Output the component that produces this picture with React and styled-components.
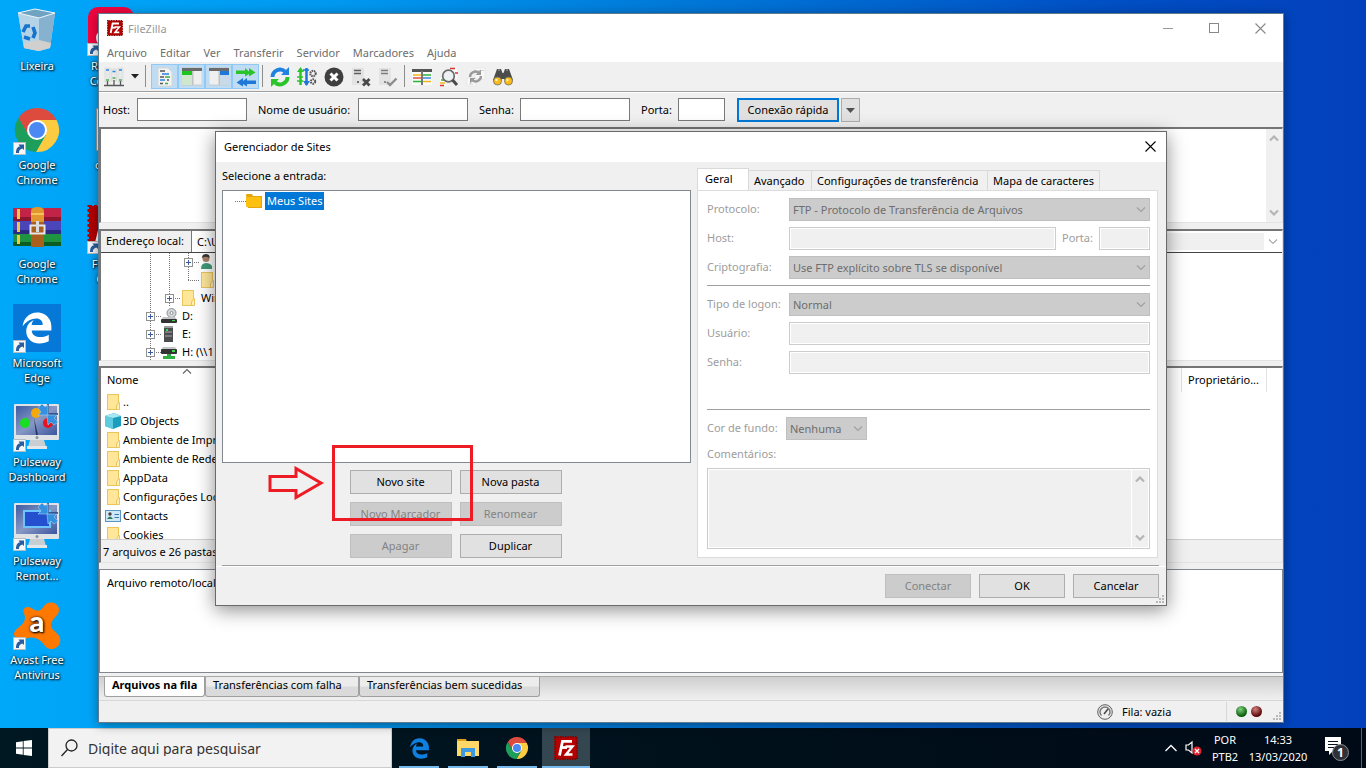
import React, { useState } from "react";
import styled, { createGlobalStyle, css } from "styled-components";
import { FaEdgeLegacy } from "react-icons/fa";

const GlobalStyle = createGlobalStyle`
  * {
    box-sizing: border-box;
  }

  body {
    margin: 0;
    font-family: "Noto Sans", "Open Sans", sans-serif;
    font-size: 11px;
    line-height: 15px;
    color: #000;
  }

  button, input, select, textarea {
    font: inherit;
    color: inherit;
    margin: 0;
    border-radius: 0;
  }

  svg {
    display: block;
    flex: none;
  }
`;

/* ---------- icons ---------- */

const FzLogo = ({ size }) => (
  <svg width={size} height={size} viewBox="0 0 24 24">
    <rect x="1" y="1" width="22" height="22" fill="#b30000" stroke="#8a0000" strokeWidth="2" strokeDasharray="1.5 1" />
    <g fill="none" stroke="#fff" strokeWidth="2.8">
      <path d="M5.500 19.500 L8.500 5.300 H18" />
      <path d="M7 11.500 H13" />
      <path d="M11.500 10.500 H18.500 L12 18.500 H18.500" strokeWidth="2.400" />
    </g>
  </svg>
);

const ChromeLogo = ({ size }) => (
  <svg width={size} height={size} viewBox="0 0 48 48">
    <path d="M5.5 12 A22 22 0 0 1 43.6 14 L24 14 L15.3 29 Z" fill="#dd4b3e" />
    <path d="M43.6 14 A22 22 0 0 1 22.9 46 L32.7 29 L24 14 Z" fill="#fdcb3f" />
    <path d="M22.9 46 A22 22 0 0 1 5.5 12 L15.3 29 L32.7 29 Z" fill="#1d9f5b" />
    <circle cx="24" cy="24" r="10" fill="#fff" />
    <circle cx="24" cy="24" r="8" fill="#4a89f3" />
  </svg>
);

const Shortcut = () => (
  <g>
    <rect x="0.5" y="36.5" width="12" height="12" fill="#f4f6f8" stroke="#b8bcc0" />
    <path d="M3 47 C3 42 5 40.5 7 40.5 L5.5 38.5 H11 V44 L9.3 42.5 C7 43.5 5.5 44.5 6 47 Z" fill="#2a5d9f" />
  </g>
);

const BinIcon = () => (
  <svg width="48" height="50" viewBox="0 0 48 50">
    <path d="M5 6 L22 2 L42 6 L37 41 L26 44 L11 41 Z" fill="#b9d3e4" />
    <path d="M5 6 L26 11 L26 44 L11 41 Z" fill="#b4d3e6" />
    <path d="M26 11 L42 6 L37 41 L26 44 Z" fill="#86b2cf" />
    <path d="M5 6 L22 2 L42 6 L26 11 Z" fill="#6fa3c2" stroke="#eef5f9" />
    <path d="M11 36 L26 33 L38 36 L37 41 L26 44 L11 41 Z" fill="#d2d0cf" />
    <g fill="none" stroke="#1673cf" strokeWidth="3.600">
      <path d="M10 25 L13 19 L17 19" />
      <path d="M20 20 L22 26 L20 31" />
      <path d="M17 32 L11 30" />
    </g>
  </svg>
);

const ChromeShortcutIcon = () => (
  <svg width="48" height="49" viewBox="0 0 48 49">
    <path d="M5.5 12 A22 22 0 0 1 43.6 14 L24 14 L15.3 29 Z" fill="#dd4b3e" />
    <path d="M43.6 14 A22 22 0 0 1 22.9 46 L32.7 29 L24 14 Z" fill="#fdcb3f" />
    <path d="M22.9 46 A22 22 0 0 1 5.5 12 L15.3 29 L32.7 29 Z" fill="#1d9f5b" />
    <circle cx="24" cy="24" r="10" fill="#fff" />
    <circle cx="24" cy="24" r="8" fill="#4a89f3" />
    <Shortcut />
  </svg>
);

const RarIcon = () => (
  <svg width="48" height="49" viewBox="0 0 48 49">
    <rect x="0" y="3" width="48" height="13" rx="1" fill="#c22448" />
    <rect x="0" y="12" width="48" height="4" fill="#8e1530" />
    <rect x="0" y="16" width="48" height="13" fill="#4a45b8" />
    <rect x="0" y="25" width="48" height="4" fill="#2c2a80" />
    <rect x="0" y="29" width="48" height="12" rx="1" fill="#1f9440" />
    <rect x="0" y="37" width="48" height="4" fill="#0d5c22" />
    <path d="M5.500 4 V14 M5.500 17 V27 M5.500 30 V39" stroke="#f2c744" strokeWidth="3" />
    <rect x="18" y="3" width="13" height="39" fill="#a8601c" />
    <path d="M18 17 V7 Q18 2 24.500 2 Q31 2 31 7 V17 Z" fill="#e2982f" />
    <rect x="18" y="8" width="13" height="2" fill="#f7c25c" />
    <rect x="17.500" y="20.500" width="14" height="8" fill="none" stroke="#e6e6ea" strokeWidth="2" />
    <rect x="23" y="16" width="3" height="11" fill="#d9dbe0" />
  </svg>
);

const EdgeShortcutIcon = () => (
  <svg width="48" height="49" viewBox="0 0 48 49">
    <rect width="48" height="48" fill="#0578d8" />
    <FaEdgeLegacy x="8" y="8" size={32} color="#fff" />
    <Shortcut />
  </svg>
);

const MonitorIcon = ({ remote }) => (
  <svg width="48" height="49" viewBox="0 0 48 49">
    <defs>
      <linearGradient id={remote ? "scrA" : "scrB"} x1="0" x2="1" y1="0" y2="1">
        <stop offset="0" stopColor="#3f5da3" />
        <stop offset="0.5" stopColor="#8798c4" />
        <stop offset="1" stopColor="#3c56a0" />
      </linearGradient>
    </defs>
    <path d="M17 37 H31 L33 44 H15 Z" fill="#c9ced3" />
    <rect x="14" y="43" width="20" height="3" fill="#e4e7ea" />
    <rect x="1" y="1" width="45" height="36" rx="1" fill="#dfe3e6" />
    <rect x="3" y="3" width="41" height="29" fill={`url(#${remote ? "scrA" : "scrB"})`} />
    {remote ? (
      <rect x="11" y="9" width="26" height="16" fill="#2450d0" stroke="#6cc4ff" strokeWidth="2" />
    ) : (
      <g>
        <circle cx="12" cy="20" r="5" fill="#18e020" />
        <circle cx="23" cy="10" r="5" fill="#f5a80a" />
        <circle cx="35" cy="20" r="5" fill="#e5141e" />
        <path d="M21 15 L25 32 H23 Z" fill="#23355f" />
      </g>
    )}
    <path d="M35 1 V11 H45" fill="none" stroke="#1c4080" strokeWidth="1.500" />
    <path d="M25 5 L29 1 L32 4 L35 2 V12 H25 L28 9 Z" fill="#3392e0" stroke="#9ed0f5" strokeWidth="0.600" />
    <path d="M34 12 H44 L41 15 L45 19 L41 22 L38 19 L35 22 Z" fill="#3392e0" stroke="#9ed0f5" strokeWidth="0.600" />
    <circle cx="24" cy="34.500" r="1.500" fill="#8a949c" />
    <Shortcut />
  </svg>
);

const AvastIcon = () => (
  <svg width="48" height="49" viewBox="0 0 48 49">
    <path
      d="M11 8 C13 5 17 6 20 8 C25 11 28 10 31 5 C35 -1 46 1 46 9 C46 15 39 17 38 23 C37 29 45 31 47 37 C49 46 38 51 33 46 C28 40 24 35 15 37 C6 40 -2 36 2 30 C5 26 12 23 12 17 C12 13 9 11 11 8 Z"
      fill="#ff7800"
    />
    <text x="24" y="31" textAnchor="middle" fontFamily="Lato, sans-serif" fontWeight="900" fontSize="29" fill="#fff">
      a
    </text>
    <Shortcut />
  </svg>
);

const PinkIcon = () => (
  <svg width="48" height="49" viewBox="0 0 48 49">
    <rect x="1" y="0" width="46" height="46" rx="10" fill="#f0063f" />
    <circle cx="18" cy="31" r="9" fill="#fff" />
    <Shortcut />
  </svg>
);

const PageFileIcon = () => (
  <svg width="48" height="49" viewBox="0 0 48 49">
    <path d="M9.500 2.500 H40.500 V44.500 H9.500 Z" fill="#f7f7f7" stroke="#9a9a9a" />
  </svg>
);

const FzShortcutIcon = () => (
  <svg width="48" height="49" viewBox="0 0 48 49">
    <rect x="2" y="1" width="44" height="44" fill="#b30000" stroke="#b30000" strokeWidth="3" strokeDasharray="3 2" />
    <path d="M10 40 L17 11 H36" fill="none" stroke="#fff" strokeWidth="5" />
    <Shortcut />
  </svg>
);

const Folder = () => (
  <svg width="16" height="18" viewBox="0 0 16 18">
    <rect x="2.500" y="1.500" width="11" height="15" fill="#ffe699" stroke="#e9c55a" />
    <path d="M13.500 9.500 H14.500 V16.500 H11.500 V13 Z" fill="#fff0b8" stroke="#e9c55a" />
  </svg>
);

const YellowFolder = () => (
  <svg width="17" height="16" viewBox="0 0 17 16">
    <path d="M0 2 Q0 1 1 1 H6 L7 3 H16 V15 H2 Z" fill="#e5a50f" />
    <rect x="0" y="4" width="15" height="10" rx="1" fill="#fdc010" />
  </svg>
);

const CubeIcon = () => (
  <svg width="16" height="16" viewBox="0 0 16 16">
    <path d="M0 3 L9 0 L16 3 V13 L8 16 L0 13 Z" fill="#1d9dbd" />
    <path d="M0 3 L8 5 V16 L0 13 Z" fill="#5fcbe0" />
    <path d="M0 3 L9 0 L16 3 L8 5 Z" fill="#a8e8f2" />
  </svg>
);

const ContactIcon = () => (
  <svg width="16" height="12" viewBox="0 0 16 12">
    <rect x="0.500" y="0.500" width="15" height="11" fill="#cfe8f7" stroke="#5b96bf" />
    <circle cx="5" cy="4" r="1.700" fill="#4a4038" />
    <path d="M2 9 Q5 4 8 9 Z" fill="#2d7d5a" />
    <path d="M9.500 4.500 H14 M9.500 7.500 H14" stroke="#3a76a8" />
  </svg>
);

const UserIcon = () => (
  <svg width="16" height="16" viewBox="0 0 16 16">
    <circle cx="7" cy="4.500" r="3.500" fill="#a8826a" />
    <path d="M3 4 Q3 0 7 0 Q11 0 10.500 4 Q7 1.500 3 4 Z" fill="#3a3430" />
    <path d="M2 15 Q2 9 7 9 Q11 9 13 12 V15 Z" fill="#3f9a78" />
  </svg>
);

const DiscDrive = () => (
  <svg width="16" height="16" viewBox="0 0 16 16">
    <circle cx="10.500" cy="5" r="4.500" fill="#d5d8da" stroke="#8b9094" />
    <circle cx="10.500" cy="5" r="1.500" fill="#fff" stroke="#8b9094" />
    <path d="M2 9 H14 L16 12 H0 Z" fill="#c3c6c8" />
    <rect x="0" y="11" width="16" height="4" rx="1" fill="#333" />
    <rect x="11" y="12" width="3" height="1" fill="#3fd84a" />
  </svg>
);

const TowerDrive = () => (
  <svg width="16" height="16" viewBox="0 0 16 16">
    <rect x="3" y="0" width="9" height="16" fill="#4b4d4f" />
    <rect x="3" y="0" width="9" height="2" fill="#9b9d9f" />
    <path d="M4 6 H11 M4 10 H11" stroke="#a9abad" />
    <rect x="5" y="3" width="2" height="2" fill="#3fd84a" />
  </svg>
);

const NetDrive = () => (
  <svg width="16" height="16" viewBox="0 0 16 16">
    <path d="M2 3 H14 L16 6 H0 Z" fill="#c3c6c8" />
    <rect x="0" y="5" width="16" height="5" rx="1" fill="#333" />
    <rect x="11" y="6" width="3" height="2" fill="#3fd84a" />
    <path d="M6 10 H10 V12 H14 V15 H2 V12 H6 Z" fill="#2fae44" />
  </svg>
);

const Chevron = ({ up, bold, color = "#a0a0a0" }) => (
  <svg width="10" height="7" viewBox="0 0 10 7">
    <path
      d={up ? "M1 5.500 L5 1.500 L9 5.500" : "M1 1.500 L5 5.500 L9 1.500"}
      fill="none"
      stroke={color}
      strokeWidth={bold ? 2.2 : 1.2}
    />
  </svg>
);

const Cross = ({ color }) => (
  <svg width="11" height="11" viewBox="0 0 11 11">
    <path d="M0.500 0.500 L10.500 10.500 M10.500 0.500 L0.500 10.500" stroke={color} strokeWidth="1.100" />
  </svg>
);

const Grip = () => (
  <svg width="9" height="9" viewBox="0 0 9 9" fill="#b8b8b8">
    <rect x="6" y="0" width="2" height="2" />
    <rect x="3" y="3" width="2" height="2" />
    <rect x="6" y="3" width="2" height="2" />
    <rect x="0" y="6" width="2" height="2" />
    <rect x="3" y="6" width="2" height="2" />
    <rect x="6" y="6" width="2" height="2" />
  </svg>
);

const toolIcons = {
  servers: (
    <g>
      <g fill="#e6e8ea" stroke="#d2d5d8" strokeWidth="0.600">
        <rect x="1" y="1" width="5" height="14" />
        <rect x="7.500" y="2" width="5" height="12" />
        <rect x="14" y="1" width="5" height="14" />
      </g>
      <path d="M2 3 H5 M8.500 4.500 H11.500 M15 3 H18" stroke="#2f86d8" strokeWidth="1.500" />
      <path d="M2 13 H5 M8.500 11 H11.500 M15 13 H18" stroke="#4fb548" strokeWidth="1.500" />
      <path d="M3.500 14 V18 M10 13 V18 M16.500 14 V18 M0 18.500 H20" stroke="#56585a" strokeWidth="1.300" />
    </g>
  ),
  log: (
    <g>
      <path d="M3 1 H13 L17 5 V19 H3 Z" fill="#f3f3f1" stroke="#d6d6d6" />
      <path d="M5 4 H10 M5 10 H9 M12 13 H14 M5 16.500 H8" stroke="#555" strokeWidth="1.300" />
      <path d="M7 7 H14 M5 13 H10" stroke="#2d7fe0" strokeWidth="1.300" />
      <path d="M10 10 H15 M10 16.500 H13" stroke="#37b23c" strokeWidth="1.300" />
    </g>
  ),
  localTree: (
    <g>
      <rect x="0" y="1" width="20" height="17" fill="#efefef" stroke="#bdbdbd" strokeWidth="0.600" />
      <rect x="0" y="1" width="20" height="3" fill="#6b6b6b" />
      <rect x="0" y="4" width="10" height="4" fill="#1fc41f" />
      <rect x="0" y="8" width="10" height="10" fill="#cfe8cd" />
      <rect x="10" y="4" width="1.500" height="14" fill="#c2c2c2" />
    </g>
  ),
  remoteTree: (
    <g>
      <rect x="0" y="1" width="20" height="17" fill="#efefef" stroke="#bdbdbd" strokeWidth="0.600" />
      <rect x="0" y="1" width="20" height="3" fill="#6b6b6b" />
      <rect x="11" y="4" width="9" height="4" fill="#1f78d8" />
      <rect x="11" y="8" width="9" height="10" fill="#c8d9ea" />
      <rect x="9.500" y="4" width="1.500" height="14" fill="#c2c2c2" />
    </g>
  ),
  queue: (
    <g>
      <path d="M0 3.500 H9 V1 L13 4.500 V1 L19.500 5.500 L13 9.500 V7 L9 9.500 V7 H0 Z" fill="#2bc42b" />
      <path d="M20 13.500 H11 V11 L7 14 V11 L0.500 15.500 L7 19.500 V17 L11 19.500 V17 H20 Z" fill="#1f78d8" />
    </g>
  ),
  refresh: (
    <g fill="none" strokeWidth="4">
      <path d="M2.500 10 A7.500 7.500 0 0 1 15 4.500" stroke="#1f82e0" />
      <path d="M17.500 10 A7.500 7.500 0 0 1 5 15.500" stroke="#2bc42b" />
      <path d="M19 0 V8 H11 Z" fill="#1f82e0" stroke="none" />
      <path d="M1 20 V12 H9 Z" fill="#2bc42b" stroke="none" />
    </g>
  ),
  process: (
    <g>
      <path d="M3.500 18 V4" stroke="#2bc42b" strokeWidth="2.500" />
      <path d="M0 5 L3.500 0 L7 5 Z" fill="#2bc42b" />
      <path d="M9.500 1 V18" stroke="#1f78d8" strokeWidth="2.500" />
      <path d="M6 14 L9.500 19 L13 14 Z" fill="#1f78d8" />
      <g fill="none" stroke="#555" strokeWidth="2" strokeDasharray="1.500 0.700">
        <circle cx="16" cy="6.500" r="2.700" />
        <circle cx="16" cy="14.500" r="2.200" />
      </g>
      <path d="M0 10 H6 M0 14 H6" stroke="#2bc42b" strokeWidth="1.500" />
      <path d="M6 3 H12" stroke="#1f78d8" strokeWidth="1.500" />
    </g>
  ),
  cancel: (
    <g>
      <circle cx="10" cy="10" r="9.500" fill="#3f3f3f" />
      <path d="M6.500 6.500 L13.500 13.500 M13.500 6.500 L6.500 13.500" stroke="#fff" strokeWidth="3" />
    </g>
  ),
  disconnect: (
    <g>
      <path d="M1 1 H13 V18 H1 Z" fill="#e3e3e3" />
      <path d="M3 3.500 H10 M3 6.500 H10" stroke="#5d5d5d" strokeWidth="1.300" />
      <rect x="6" y="14" width="2" height="2" fill="#6d6d6d" />
      <path d="M12 12 L18.500 18.500 M18.500 12 L12 18.500" stroke="#4a4a4a" strokeWidth="2.800" />
    </g>
  ),
  reconnect: (
    <g>
      <path d="M1 1 H13 V18 H1 Z" fill="#e3e3e3" />
      <path d="M3 3.500 H10 M3 6.500 H10" stroke="#7d7d7d" strokeWidth="1.300" />
      <rect x="6" y="14" width="2" height="2" fill="#8d8d8d" />
      <path d="M9 15 L12 18 L18.500 11.500" fill="none" stroke="#8d8d8d" strokeWidth="2.400" />
    </g>
  ),
  compare: (
    <g>
      <rect x="0" y="2" width="20" height="16" fill="#fafafa" />
      <rect x="0" y="2" width="20" height="3" fill="#555" />
      <path d="M1 8 H9 M11 14.500 H19" stroke="#f0b71c" strokeWidth="1.300" />
      <path d="M1 11 H9" stroke="#d8362c" strokeWidth="1.300" />
      <path d="M1 14.500 H9 M11 8 H19" stroke="#2bb634" strokeWidth="1.300" />
      <path d="M11 11 H19" stroke="#1f78d8" strokeWidth="1.300" />
      <rect x="9" y="4" width="2" height="14" fill="#777" />
    </g>
  ),
  filter: (
    <g>
      <path d="M9 1 H18 V12 H9 Z M1 11 H8 V19 H1 Z" fill="#fafafa" />
      <path d="M11 1.500 H16" stroke="#d8362c" strokeWidth="1.500" />
      <path d="M2 13 H5" stroke="#2bb634" strokeWidth="1.500" />
      <path d="M1 16 H6" stroke="#f0b71c" strokeWidth="1.500" />
      <path d="M1 18.500 H5 M16 6 H19" stroke="#d8362c" strokeWidth="1.500" />
      <circle cx="9.500" cy="9" r="5.800" fill="#edf1f3" stroke="#6a6a6a" strokeWidth="1.700" />
      <path d="M13.500 13 L18 18" stroke="#4a4a4a" strokeWidth="3" />
    </g>
  ),
  sync: (
    <g>
      <path d="M9 1 H19 V12 H9 Z M1 11 H10 V19 H1 Z" fill="#f8f8f8" stroke="#e2e2e2" strokeWidth="0.600" />
      <path d="M12 3.500 H18 M3 17 H7" stroke="#d0d0d0" />
      <g fill="none" stroke="#999" strokeWidth="2.400">
        <path d="M4 10 A5.500 5.500 0 0 1 12.500 5.500" />
        <path d="M15 9 A5.500 5.500 0 0 1 6.500 13.500" />
      </g>
      <path d="M15 2.500 V8 H9.500 Z M4 16.500 V11 H9.500 Z" fill="#999" />
    </g>
  ),
  find: (
    <g>
      <path d="M4 2 L8 2 L9.500 6 H10.500 L12 2 L16 2 L20 13 L15 17 L11 12 H9 L5 17 L0 13 Z" fill="#4c4c4c" />
      <path d="M5 3 H7 M13 3 H15" stroke="#8a8a8a" strokeWidth="1.500" />
      <circle cx="4.500" cy="14" r="4" fill="#fdbb16" stroke="#6a6a6a" strokeWidth="0.800" />
      <circle cx="15.500" cy="14" r="4" fill="#fdbb16" stroke="#6a6a6a" strokeWidth="0.800" />
      <circle cx="3.500" cy="13" r="1.200" fill="#fff0b5" />
      <circle cx="14.500" cy="13" r="1.200" fill="#fff0b5" />
    </g>
  ),
};

const ToolIcon = ({ name }) => (
  <svg width="20" height="20" viewBox="0 0 20 20">
    {toolIcons[name]}
  </svg>
);

/* ---------- data ---------- */

const shortcuts = [
  { icon: <BinIcon />, label: "Lixeira" },
  { icon: <ChromeShortcutIcon />, label: "Google Chrome" },
  { icon: <RarIcon />, label: "Google Chrome" },
  { icon: <EdgeShortcutIcon />, label: "Microsoft Edge" },
  { icon: <MonitorIcon />, label: "Pulseway Dashboard" },
  { icon: <MonitorIcon remote />, label: "Pulseway Remot..." },
  { icon: <AvastIcon />, label: "Avast Free Antivirus" },
  { icon: <PinkIcon />, label: "Remote Connect" },
  { icon: <PageFileIcon />, label: "config" },
  { icon: <FzShortcutIcon />, label: "FileZilla Client" },
];

const menus = ["Arquivo", "Editar", "Ver", "Transferir", "Servidor", "Marcadores", "Ajuda"];

const toggles = ["log", "localTree", "remoteTree", "queue"];
const actions = ["refresh", "process", "cancel", "disconnect", "reconnect"];
const extras = ["compare", "filter", "sync", "find"];

const quickFields = [
  { id: "qhost", label: "Host:", labelWidth: 34, width: 110 },
  { id: "quser", label: "Nome de usuário:", labelWidth: 100, width: 110 },
  { id: "qpass", label: "Senha:", labelWidth: 41, width: 110 },
  { id: "qport", label: "Porta:", labelWidth: 37, width: 47 },
];

// guides: "|" line only, "+" expander, "L" last branch
const treeRows = [
  { guides: ["|", "|", "+"], icon: <UserIcon />, text: "" },
  { guides: ["|", "|", "L"], icon: <Folder />, text: "" },
  { guides: ["|", "+"], icon: <Folder />, text: "Windows" },
  { guides: ["+"], icon: <DiscDrive />, text: "D:" },
  { guides: ["+"], icon: <TowerDrive />, text: "E:" },
  { guides: ["+"], icon: <NetDrive />, text: "H: (\\\\1" },
];

const files = [
  { icon: <Folder />, name: ".." },
  { icon: <CubeIcon />, name: "3D Objects" },
  { icon: <Folder />, name: "Ambiente de Impressão" },
  { icon: <Folder />, name: "Ambiente de Rede" },
  { icon: <Folder />, name: "AppData" },
  { icon: <Folder />, name: "Configurações Locais" },
  { icon: <ContactIcon />, name: "Contacts" },
  { icon: <Folder />, name: "Cookies" },
];

const siteButtons = [
  { label: "Novo site" },
  { label: "Nova pasta" },
  { label: "Novo Marcador", disabled: true },
  { label: "Renomear", disabled: true },
  { label: "Apagar", disabled: true },
  { label: "Duplicar" },
];

const siteTabs = [
  { label: "Avançado", width: 63 },
  { label: "Configurações de transferência", width: 176 },
  { label: "Mapa de caracteres", width: 112 },
];

const queueTabs = [
  { label: "Arquivos na fila", width: 101 },
  { label: "Transferências com falha", width: 154 },
  { label: "Transferências bem sucedidas", width: 181 },
];

/* ---------- components ---------- */

const Dropdown = ({ id, value }) => (
  <SelectWrap>
    <SelectBox id={id} disabled defaultValue={value}>
      <option>{value}</option>
    </SelectBox>
    <SelectArrow>
      <Chevron />
    </SelectArrow>
  </SelectWrap>
);

const MainWindow = () => {
  const [activeTab, setActiveTab] = useState(0);

  return (
    <Window>
      <TitleBar>
        <FzLogo size={16} />
        <WindowTitle>FileZilla</WindowTitle>
        <WindowButton aria-label="Minimizar">
          <svg width="11" height="11" viewBox="0 0 11 11">
            <path d="M0 5.500 H10" stroke="#999" />
          </svg>
        </WindowButton>
        <WindowButton aria-label="Maximizar">
          <svg width="11" height="11" viewBox="0 0 11 11">
            <rect x="0.500" y="0.500" width="9" height="9" fill="none" stroke="#888" />
          </svg>
        </WindowButton>
        <WindowButton aria-label="Fechar">
          <Cross color="#888" />
        </WindowButton>
      </TitleBar>

      <MenuBar>
        {menus.map((menu) => (
          <MenuItem key={menu}>{menu}</MenuItem>
        ))}
      </MenuBar>

      <Toolbar>
        <ToolButton $wide aria-label="Gerenciador de Sites">
          <ToolIcon name="servers" />
          <svg width="8" height="5" viewBox="0 0 8 5">
            <path d="M0 0 H8 L4 4.500 Z" fill="#222" />
          </svg>
        </ToolButton>
        <ToolDivider />
        <ToolGap />
        {toggles.map((name) => (
          <ToolButton key={name} $on aria-label={name}>
            <ToolIcon name={name} />
          </ToolButton>
        ))}
        <ToolDivider />
        {actions.map((name) => (
          <ToolButton key={name} aria-label={name}>
            <ToolIcon name={name} />
          </ToolButton>
        ))}
        <ToolDivider />
        {extras.map((name) => (
          <ToolButton key={name} aria-label={name}>
            <ToolIcon name={name} />
          </ToolButton>
        ))}
      </Toolbar>

      <QuickBar>
        {quickFields.map((f) => (
          <QuickField key={f.id}>
            <QuickLabel htmlFor={f.id} $width={f.labelWidth}>
              {f.label}
            </QuickLabel>
            <QuickInput id={f.id} $width={f.width} />
          </QuickField>
        ))}
        <ConnectButton>Conexão rápida</ConnectButton>
        <ConnectDrop aria-label="Histórico">
          <svg width="9" height="5" viewBox="0 0 9 5">
            <path d="M0 0 H9 L4.500 5 Z" fill="#505050" />
          </svg>
        </ConnectDrop>
      </QuickBar>

      <LogPane>
        <ScrollTrack>
          <Chevron up bold color="#b5b5b5" />
          <Chevron bold color="#b5b5b5" />
        </ScrollTrack>
      </LogPane>

      <SplitRow $gap={6}>
        <TreePane>
          <AddressBar>
            <AddressLabel htmlFor="local">Endereço local:</AddressLabel>
            <AddressInput id="local" defaultValue="C:\Users\" />
          </AddressBar>
          <Tree>
            {treeRows.map((row, i) => (
              <TreeRow key={i}>
                {row.guides.map((g, j) => (
                  <Guide key={j} $kind={g}>
                    {g === "+" && <Expander />}
                  </Guide>
                ))}
                {row.icon}
                <TreeText>{row.text}</TreeText>
              </TreeRow>
            ))}
          </Tree>
        </TreePane>
        <TreePane>
          <AddressBar>
            <RemoteInput aria-label="Endereço remoto" disabled />
            <RemoteArrow>
              <Chevron color="#aaa" />
            </RemoteArrow>
          </AddressBar>
        </TreePane>
      </SplitRow>

      <SplitRow $gap={5} $grow>
        <ListPane>
          <ListBody>
            <FileTable>
              <thead>
                <tr>
                  <HeadCell>
                    <HeadInner>
                      <SortMark>
                        <Chevron up color="#666" />
                      </SortMark>
                      Nome
                    </HeadInner>
                  </HeadCell>
                </tr>
              </thead>
              <tbody>
                {files.map((file) => (
                  <tr key={file.name}>
                    <FileCell>
                      <FileInner>
                        <FileIconBox>{file.icon}</FileIconBox>
                        {file.name}
                      </FileInner>
                    </FileCell>
                  </tr>
                ))}
              </tbody>
            </FileTable>
          </ListBody>
          <ListStatus>7 arquivos e 26 pastas.</ListStatus>
        </ListPane>
        <ListPane>
          <ListBody>
            <RemoteHead>
              <RemoteColumn $width={84}>Permissões</RemoteColumn>
              <RemoteColumn $width={85}>Proprietário...</RemoteColumn>
            </RemoteHead>
          </ListBody>
          <ListStatus />
        </ListPane>
      </SplitRow>

      <QueuePane>Arquivo remoto/local</QueuePane>

      <QueueTabs role="tablist">
        {queueTabs.map((tab, i) => (
          <QueueTab
            key={tab.label}
            role="tab"
            aria-selected={i === activeTab}
            $active={i === activeTab}
            $width={tab.width}
            onClick={() => setActiveTab(i)}
          >
            {tab.label}
          </QueueTab>
        ))}
      </QueueTabs>

      <StatusBar>
        <svg width="16" height="16" viewBox="0 0 16 16">
          <circle cx="8" cy="8" r="7.300" fill="#eee" stroke="#5b5b5b" />
          <circle cx="8" cy="8" r="5" fill="none" stroke="#777" strokeWidth="1.500" strokeDasharray="23 9" transform="rotate(135 8 8)" />
          <path d="M7 10 L11 5" stroke="#444" strokeWidth="1.500" />
        </svg>
        <QueueText>Fila: vazia</QueueText>
        <Led $from="#7fd07f" $to="#0a5a0a" />
        <Led $from="#d07f7f" $to="#5a0505" />
        <GripCorner>
          <Grip />
        </GripCorner>
      </StatusBar>
    </Window>
  );
};

const SiteManager = () => (
  <Dialog role="dialog" aria-label="Gerenciador de Sites">
    <DialogTitle>
      <span>Gerenciador de Sites</span>
      <CloseButton aria-label="Fechar">
        <Cross color="#000" />
      </CloseButton>
    </DialogTitle>

    <DialogBody>
      <EntryColumn>
        <EntryLabel>Selecione a entrada:</EntryLabel>
        <EntryTree>
          <EntryBranch />
          <YellowFolder />
          <EntrySelected>Meus Sites</EntrySelected>
        </EntryTree>
        <ButtonGrid>
          {siteButtons.map((b) => (
            <PushButton key={b.label} disabled={b.disabled}>
              {b.label}
            </PushButton>
          ))}
        </ButtonGrid>
      </EntryColumn>

      <Notebook>
        <SiteTabs role="tablist">
          <SiteTab role="tab" aria-selected $active $width={52}>
            Geral
          </SiteTab>
          {siteTabs.map((tab) => (
            <SiteTab key={tab.label} role="tab" aria-selected={false} $width={tab.width}>
              {tab.label}
            </SiteTab>
          ))}
        </SiteTabs>
        <NotebookPage>
          <FormRow>
            <FormLabel htmlFor="protocol">Protocolo:</FormLabel>
            <Dropdown id="protocol" value="FTP - Protocolo de Transferência de Arquivos" />
          </FormRow>
          <FormRow>
            <FormLabel htmlFor="host">Host:</FormLabel>
            <HostGroup>
              <FormInput id="host" disabled />
              <FormLabel htmlFor="port">Porta:</FormLabel>
              <FormInput id="port" disabled />
            </HostGroup>
          </FormRow>
          <FormRow>
            <FormLabel htmlFor="crypt">Criptografia:</FormLabel>
            <Dropdown id="crypt" value="Use FTP explícito sobre TLS se disponível" />
          </FormRow>
          <Rule />
          <FormRow>
            <FormLabel htmlFor="logon">Tipo de logon:</FormLabel>
            <Dropdown id="logon" value="Normal" />
          </FormRow>
          <FormRow>
            <FormLabel htmlFor="user">Usuário:</FormLabel>
            <FormInput id="user" disabled />
          </FormRow>
          <FormRow>
            <FormLabel htmlFor="pass">Senha:</FormLabel>
            <FormInput id="pass" type="password" disabled />
          </FormRow>
          <Rule $bottom />
          <ColorRow>
            <FormLabel htmlFor="color">Cor de fundo:</FormLabel>
            <Dropdown id="color" value="Nenhuma" />
          </ColorRow>
          <CommentLabel htmlFor="notes">Comentários:</CommentLabel>
          <CommentBox>
            <CommentArea id="notes" disabled />
            <ScrollTrack $edge>
              <Chevron up bold color="#b5b5b5" />
              <Chevron bold color="#b5b5b5" />
            </ScrollTrack>
          </CommentBox>
        </NotebookPage>
      </Notebook>
    </DialogBody>

    <DialogFooter>
      <PushButton disabled>Conectar</PushButton>
      <PushButton>OK</PushButton>
      <PushButton>Cancelar</PushButton>
    </DialogFooter>
    <DialogGrip>
      <Grip />
    </DialogGrip>

    <Highlight />
    <Pointer>
      <svg width="56" height="34" viewBox="0 0 56 34">
        <path d="M2 10.500 H28 V2.500 L53 17 L28 31.500 V24.500 H2 Z" fill="none" stroke="#ed1c24" strokeWidth="3" />
      </svg>
    </Pointer>
  </Dialog>
);

const Taskbar = () => (
  <Bar>
    <StartButton aria-label="Iniciar">
      <svg width="16" height="16" viewBox="0 0 16 16" fill="#fff">
        <path d="M0 2.200 L6.800 1.200 V7.600 H0 Z M7.600 1.100 L16 0 V7.600 H7.600 Z M0 8.400 H6.800 V14.800 L0 13.800 Z M7.600 8.400 H16 V16 L7.600 14.900 Z" />
      </svg>
    </StartButton>
    <SearchBox>
      <svg width="17" height="18" viewBox="0 0 17 18">
        <circle cx="10.500" cy="6.500" r="5.500" fill="none" stroke="#222" strokeWidth="1.300" />
        <path d="M6.500 10.500 L0.500 17" stroke="#222" strokeWidth="1.300" />
      </svg>
      <SearchInput aria-label="Pesquisar" placeholder="Digite aqui para pesquisar" />
    </SearchBox>
    <TaskList>
      <TaskButton aria-label="Edge">
        <FaEdgeLegacy size={21} color="#0f7fe0" />
      </TaskButton>
      <TaskButton aria-label="Explorador de Arquivos">
        <svg width="22" height="20" viewBox="0 0 22 20">
          <path d="M0 1 H9 L10 4 H0 Z" fill="#e0a21c" />
          <rect x="0" y="3" width="22" height="15" fill="#ffd868" />
          <path d="M4 19 V10 H18 V19 H14 V14 H8 V19 Z" fill="#3d9ae0" />
        </svg>
      </TaskButton>
      <TaskButton aria-label="Chrome">
        <ChromeLogo size={24} />
      </TaskButton>
      <TaskButton aria-label="FileZilla" $active>
        <FzLogo size={24} />
      </TaskButton>
    </TaskList>
    <Tray>
      <TrayIcons>
        <svg width="12" height="8" viewBox="0 0 12 8">
          <path d="M0.500 7 L6 1.500 L11.500 7" fill="none" stroke="#fff" strokeWidth="1.300" />
        </svg>
        <svg width="17" height="16" viewBox="0 0 17 16">
          <path d="M1 5 H3.500 L7 2 V13 L3.500 10 H1 Z" fill="none" stroke="#fff" strokeWidth="1.200" />
          <circle cx="12" cy="11" r="4.500" fill="#e0202c" />
          <path d="M10 9 L14 13 M14 9 L10 13" stroke="#fff" strokeWidth="1.300" />
        </svg>
      </TrayIcons>
      <TrayText $width={36}>
        POR
        <br />
        PTB2
      </TrayText>
      <TrayText $width={70}>
        14:33
        <br />
        13/03/2020
      </TrayText>
      <NoticeButton aria-label="Notificações">
        <svg width="25" height="25" viewBox="0 0 25 25">
          <path d="M1 0 H17 V14 H9 L5 18 V14 H1 Z" fill="#fff" />
          <path d="M4 4.500 H14 M4 7.500 H14 M4 10.500 H11" stroke="#0a1420" strokeWidth="1.200" />
          <circle cx="16.500" cy="15.500" r="8" fill="#2e3238" stroke="#8b8f94" />
          <text x="16.500" y="20" textAnchor="middle" fontSize="12" fontWeight="700" fill="#fff">
            1
          </text>
        </svg>
      </NoticeButton>
      <ShowDesktop />
    </Tray>
  </Bar>
);

const App = () => (
  <Screen>
    <GlobalStyle />
    <Desktop>
      <ShortcutGrid>
        {shortcuts.map((s, i) => (
          <ShortcutItem key={i} href="#">
            <ShortcutIconBox>{s.icon}</ShortcutIconBox>
            {s.label}
          </ShortcutItem>
        ))}
      </ShortcutGrid>
      <MainWindow />
      <SiteManager />
    </Desktop>
    <Taskbar />
  </Screen>
);

/* ---------- desktop ---------- */

const Screen = styled.div`
  display: flex;
  flex-direction: column;
  height: 100vh;
  min-height: 680px;
  overflow: hidden;
`;

const Desktop = styled.main`
  position: relative;
  flex: 1;
  min-height: 0;
  background: linear-gradient(90deg, #00a8fa 0%, #0098f0 25%, #0078d8 50%, #0050c4 80%, #0340bb 100%);
`;

const ShortcutGrid = styled.nav`
  display: grid;
  grid-auto-flow: column;
  grid-template-rows: repeat(7, 99px);
  grid-auto-columns: 74px;
  justify-content: start;
  padding-top: 7px;
`;

const ShortcutItem = styled.a`
  padding: 0 7px;
  color: #fff;
  text-align: center;
  text-decoration: none;
  text-shadow: 1px 1px 2px #000, 0 0 3px rgba(0, 0, 0, 0.8);
`;

const ShortcutIconBox = styled.span`
  display: flex;
  justify-content: center;
  height: 51px;
  margin: 0 6px;
`;

/* ---------- main window ---------- */

const Window = styled.section`
  position: absolute;
  top: 13px;
  right: 82px;
  bottom: 5px;
  left: 98px;
  display: flex;
  flex-direction: column;
  background: #f0f0f0;
  border: 1px solid #5f7a8a;
  box-shadow: 0 2px 10px rgba(0, 0, 0, 0.4);
`;

const TitleBar = styled.header`
  display: flex;
  align-items: center;
  height: 30px;
  padding: 0 0 2px 8px;
  background: #fff;
  color: #999;
`;

const WindowTitle = styled.span`
  flex: 1;
  margin-left: 5px;
`;

const WindowButton = styled.button`
  display: flex;
  align-items: center;
  justify-content: center;
  width: 46px;
  height: 28px;
  padding: 0;
  border: 0;
  background: none;
`;

const MenuBar = styled.nav`
  display: flex;
  height: 18px;
  padding-left: 1px;
  background: #fff;
`;

const MenuItem = styled.button`
  padding: 0 6px 1px 7px;
  border: 0;
  background: none;
  color: #6d6d6d;
`;

const Toolbar = styled.div`
  display: flex;
  align-items: flex-start;
  height: 30px;
  padding: 2px 0 0 1px;
  border-bottom: 1px solid #a0a0a0;
`;

const ToolButton = styled.button`
  display: flex;
  align-items: center;
  justify-content: center;
  gap: 7px;
  width: ${({ $wide }) => ($wide ? "42px" : "27px")};
  height: 25px;
  padding: 0;
  border: 1px solid transparent;
  background: none;

  ${({ $on }) =>
    $on &&
    css`
      border-color: #90c8f6;
      background: #c0dcf3;
    `}
`;

const ToolDivider = styled.span`
  width: 1px;
  height: 22px;
  margin: 1px 3px;
  background: #8d8d8d;
`;

const ToolGap = styled.span`
  width: 2px;
`;

const QuickBar = styled.form`
  display: flex;
  align-items: flex-start;
  height: 35px;
  padding: 5px 0 0 4px;
  border-top: 1px solid #fff;
`;

const QuickField = styled.div`
  display: flex;
  align-items: center;
  margin-right: 11px;
`;

const QuickLabel = styled.label`
  width: ${({ $width }) => $width}px;
  padding-bottom: 1px;
  white-space: nowrap;
`;

const QuickInput = styled.input`
  width: ${({ $width }) => $width}px;
  height: 23px;
  padding: 0 4px;
  border: 1px solid #7a7a7a;
  background: #fff;
`;

const ConnectButton = styled.button.attrs({ type: "button" })`
  width: 102px;
  height: 24px;
  margin-left: 1px;
  padding: 0 0 2px;
  border: 2px solid #0078d7;
  background: #e1e1e1;
`;

const ConnectDrop = styled.button.attrs({ type: "button" })`
  display: flex;
  align-items: center;
  justify-content: center;
  width: 19px;
  height: 24px;
  margin-left: 2px;
  padding: 0;
  border: 1px solid #adadad;
  background: #e1e1e1;
`;

const sunken = css`
  border: 1px solid #e3e3e3;
  border-top: 2px solid #757575;
  border-left: 2px solid #757575;
  background: #fff;
`;

const LogPane = styled.div`
  display: flex;
  justify-content: flex-end;
  height: 96px;
  ${sunken}
`;

const ScrollTrack = styled.div`
  display: flex;
  flex-direction: column;
  align-items: center;
  justify-content: space-between;
  width: ${({ $edge }) => ($edge ? "17px" : "16px")};
  padding: 6px 0;
  background: #f0f0f0;
  border-left: ${({ $edge }) => ($edge ? "1px solid #fff" : "0")};
`;

const SplitRow = styled.div`
  display: grid;
  grid-template-columns: minmax(0, 1fr) minmax(0, 1fr);
  gap: 5px;
  flex: ${({ $grow }) => ($grow ? "1" : "0 0 auto")};
  min-height: 0;
  margin-top: ${({ $gap }) => $gap}px;
`;

const TreePane = styled.div`
  height: 132px;
  overflow: hidden;
  ${sunken}
`;

const AddressBar = styled.div`
  display: flex;
  height: 22px;
  border-bottom: 1px solid #444;
`;

const AddressLabel = styled.label`
  width: 91px;
  padding: 2px 0 0 5px;
  background: #f0f0f0;
  border-right: 1px solid #777;
  white-space: nowrap;
`;

const AddressInput = styled.input`
  flex: 1;
  min-width: 0;
  padding: 0 5px 1px;
  border: 0;
`;

const RemoteInput = styled.input`
  flex: 1;
  min-width: 0;
  margin: 2px 0 2px 2px;
  border: 0;
  background: #f0f0f0;
`;

const RemoteArrow = styled.span`
  display: flex;
  align-items: center;
  justify-content: center;
  width: 18px;
`;

const Tree = styled.div`
  padding-left: 41px;
`;

const TreeRow = styled.div`
  display: flex;
  align-items: center;
  height: 18px;
`;

const TreeText = styled.span`
  margin-left: 5px;
  padding-bottom: 2px;
  white-space: nowrap;
`;

const Guide = styled.span`
  display: flex;
  align-items: center;
  align-self: stretch;
  width: 19px;
  padding-left: 4px;
  background-image: repeating-linear-gradient(#777 0 1px, transparent 1px 2px),
    repeating-linear-gradient(90deg, #777 0 1px, transparent 1px 2px);
  background-repeat: no-repeat;
  background-position: 8px 0, 8px 9px;
  background-size: ${({ $kind }) =>
    ({ "|": "1px 100%, 0 0", "+": "1px 100%, 11px 1px", L: "1px 9px, 11px 1px" })[$kind]};
`;

const Expander = styled.span`
  display: grid;
  width: 9px;
  height: 9px;
  border: 1px solid #919191;
  background: linear-gradient(#3b5aa0, #3b5aa0) center / 5px 1px no-repeat,
    linear-gradient(#3b5aa0, #3b5aa0) center / 1px 5px no-repeat, #fff;
`;

const ListPane = styled.div`
  display: flex;
  flex-direction: column;
  min-height: 0;
  overflow: hidden;
  ${sunken}
`;

const ListBody = styled.div`
  flex: 1;
  min-height: 0;
  overflow: hidden;
`;

const FileTable = styled.table`
  width: 171px;
  border-collapse: collapse;
  white-space: nowrap;
`;

const HeadCell = styled.th`
  padding: 0;
  font-weight: 400;
  text-align: left;
`;

const HeadInner = styled.div`
  position: relative;
  height: 24px;
  padding: 4px 6px;
`;

const SortMark = styled.span`
  position: absolute;
  top: 0;
  left: 50%;
  margin-left: -5px;
`;

const FileCell = styled.td`
  padding: 0;
`;

const FileInner = styled.div`
  display: flex;
  align-items: center;
  height: 19px;
  padding-left: 4px;
`;

const FileIconBox = styled.span`
  width: 16px;
  margin-right: 2px;
`;

const ListStatus = styled.div`
  height: 23px;
  padding: 4px 2px;
  border-top: 1px solid #d0d0d0;
  background: #f0f0f0;
`;

const RemoteHead = styled.div`
  display: flex;
  justify-content: flex-end;
  padding-right: 15px;
`;

const RemoteColumn = styled.span`
  width: ${({ $width }) => $width}px;
  height: 24px;
  padding: 4px 6px;
  border-right: 1px solid #e3e3e3;
`;

const QueuePane = styled.div`
  height: 104px;
  margin-top: 6px;
  padding: 5px 7px;
  border: 1px solid #828790;
  background: #fff;
`;

const QueueTabs = styled.div`
  display: flex;
  align-items: flex-start;
  height: 24px;
  margin-top: 3px;
  padding-left: 5px;
  border-top: 1px solid #a8a8a8;
  background: linear-gradient(#cfcfcf, #f0f0f0);
`;

const QueueTab = styled.button`
  width: ${({ $width }) => $width}px;
  height: 20px;
  padding: 0 6px 4px 7px;
  border: 1px solid #a0a0a0;
  border-top: 0;
  border-radius: 0 0 3px 3px;
  background: ${({ $active }) => ($active ? "#fff" : "linear-gradient(#ececec 45%, #dadada 55%)")};
  font-weight: ${({ $active }) => ($active ? 700 : 400)};
  text-align: left;
  white-space: nowrap;
`;

const StatusBar = styled.footer`
  display: flex;
  align-items: center;
  height: 22px;
  border-top: 1px solid #d7d7d7;
  justify-content: flex-end;
`;

const QueueText = styled.span`
  width: 105px;
  margin: 0 9px;
  border-right: 1px solid #d7d7d7;
  line-height: 19px;
`;

const Led = styled.span`
  width: 11px;
  height: 11px;
  margin-right: 4px;
  border-radius: 50%;
  background: radial-gradient(circle at 40% 30%, ${({ $from }) => $from}, ${({ $to }) => $to} 70%);
`;

const GripCorner = styled.span`
  align-self: flex-end;
  margin: 0 1px 1px 7px;
`;

/* ---------- site manager ---------- */

const Dialog = styled.section`
  position: absolute;
  top: 131px;
  right: 199px;
  bottom: 122px;
  left: 215px;
  display: flex;
  flex-direction: column;
  border: 1px solid #6a6a6a;
  background: #f0f0f0;
  box-shadow: 0 4px 18px rgba(0, 0, 0, 0.45);
`;

const DialogTitle = styled.header`
  display: flex;
  align-items: center;
  justify-content: space-between;
  height: 30px;
  padding: 0 0 2px 8px;
  background: #fff;
`;

const CloseButton = styled.button`
  display: flex;
  align-items: center;
  justify-content: center;
  width: 31px;
  height: 28px;
  padding: 0;
  border: 0;
  background: none;
`;

const DialogBody = styled.div`
  display: flex;
  flex: 1;
  gap: 6px;
  min-height: 0;
  margin: 0 7px 0 6px;
  padding: 6px 1px 7px 0;
  border-bottom: 1px solid #a0a0a0;
`;

const EntryColumn = styled.div`
  display: flex;
  flex: 1;
  flex-direction: column;
`;

const EntryLabel = styled.span`
  margin-bottom: 7px;
`;

const EntryTree = styled.div`
  display: flex;
  flex: 1;
  align-items: flex-start;
  padding: 1px 0 0 12px;
  border: 1px solid #828790;
  background: #fff;

  svg {
    margin: 1px 2px 0 0;
  }
`;

const EntryBranch = styled.span`
  width: 11px;
  height: 1px;
  margin-top: 9px;
  background: repeating-linear-gradient(90deg, #777 0 1px, transparent 1px 2px);
`;

const EntrySelected = styled.span`
  padding: 1px 2px 2px;
  background: #0078d7;
  color: #fff;
`;

const PushButton = styled.button`
  height: 24px;
  padding: 0 0 2px;
  border: 1px solid #adadad;
  background: #e1e1e1;

  &:disabled {
    border-color: #bfbfbf;
    background: #ccc;
    color: #838383;
  }
`;

const ButtonGrid = styled.div`
  display: grid;
  grid-template-columns: repeat(2, 102px);
  gap: 8px;
  justify-content: center;
  padding: 7px 2px 0 0;
`;

const Notebook = styled.div`
  display: flex;
  flex-direction: column;
  width: 461px;
`;

const SiteTabs = styled.div`
  display: flex;
  align-items: flex-end;
  height: 22px;
`;

const SiteTab = styled.button`
  width: ${({ $width }) => $width}px;
  height: ${({ $active }) => ($active ? "22px" : "20px")};
  padding: ${({ $active }) => ($active ? "0 0 2px 7px" : "0 0 0 5px")};
  border: 1px solid #d9d9d9;
  border-bottom: 0;
  border-left-width: ${({ $active }) => ($active ? "1px" : "0")};
  background: ${({ $active }) => ($active ? "#fff" : "#f0f0f0")};
  text-align: left;
  white-space: nowrap;
`;

const NotebookPage = styled.div`
  display: flex;
  flex: 1;
  flex-direction: column;
  gap: 6px;
  padding: 7px 7px 8px 9px;
  border: 1px solid #dcdcdc;
  background: #fff;
`;

const FormRow = styled.div`
  display: grid;
  grid-template-columns: 82px minmax(0, 1fr);
  align-items: center;
`;

const FormLabel = styled.label`
  padding-bottom: 2px;
  color: #9d9d9d;
  white-space: nowrap;
`;

const HostGroup = styled.div`
  display: grid;
  grid-template-columns: minmax(0, 1fr) 31px 51px;
  column-gap: 6px;
  align-items: center;
`;

const FormInput = styled.input`
  width: 100%;
  height: 23px;
  padding: 0 4px;
  border: 1px solid #ccc;
  background: #f0f0f0;
  box-shadow: inset 0 0 0 1px #fff;
`;

const SelectWrap = styled.div`
  display: grid;
  grid-template-columns: minmax(0, 1fr) 14px;
  align-items: center;
`;

const SelectBox = styled.select`
  grid-area: 1 / 1 / 2 / 3;
  width: 100%;
  height: 23px;
  padding: 0 4px 0 3px;
  border: 1px solid #bfbfbf;
  background: #ccc;
  color: #6d6d6d;
  opacity: 1;
  appearance: none;
`;

const SelectArrow = styled.span`
  grid-area: 1 / 2;
  pointer-events: none;
  z-index: 1;
`;

const Rule = styled.hr`
  width: 100%;
  height: 1px;
  margin: ${({ $bottom }) => ($bottom ? "29px 0 1px" : "0 0 1px")};
  border: 0;
  background: #a0a0a0;
`;

const ColorRow = styled.div`
  display: grid;
  grid-template-columns: 79px 81px;
  align-items: center;
`;

const CommentLabel = styled(FormLabel)`
  padding-bottom: 1px;
`;

const CommentBox = styled.div`
  display: flex;
  flex: 1;
  padding: 1px;
  border: 1px solid #ccc;
`;

const CommentArea = styled.textarea`
  flex: 1;
  min-width: 0;
  padding: 2px;
  border: 0;
  background: #f0f0f0;
  resize: none;
`;

const DialogFooter = styled.footer`
  display: grid;
  grid-template-columns: repeat(3, 86px);
  gap: 8px;
  justify-content: end;
  height: 39px;
  padding: 7px 7px 0 0;
  border-top: 1px solid #fff;
`;

const DialogGrip = styled.span`
  position: absolute;
  right: 1px;
  bottom: 1px;
`;

const Highlight = styled.div`
  position: absolute;
  top: 313px;
  left: 116px;
  width: 141px;
  height: 76px;
  border: 3px solid #ed1c24;
`;

const Pointer = styled.div`
  position: absolute;
  top: 334px;
  left: 52px;
`;

/* ---------- taskbar ---------- */

const Bar = styled.footer`
  display: flex;
  height: 40px;
  background: linear-gradient(90deg, #001822, #000a16);
  color: #fff;
`;

const StartButton = styled.button`
  display: flex;
  align-items: center;
  justify-content: center;
  width: 48px;
  border: 0;
  background: none;
`;

const SearchBox = styled.div`
  display: flex;
  align-items: center;
  width: 344px;
  padding-left: 12px;
  border: 1px solid #ccc;
  background: #f2f2f2;
`;

const SearchInput = styled.input`
  flex: 1;
  min-width: 0;
  padding: 0 10px;
  border: 0;
  background: none;
  color: #222;
  font-size: 14px;

  &::placeholder {
    color: #333;
    opacity: 1;
  }
`;

const TaskList = styled.div`
  display: flex;
  flex: 1;
  gap: 1px;
  margin-left: 3px;
`;

const TaskButton = styled.button`
  display: flex;
  align-items: center;
  justify-content: center;
  width: 48px;
  padding: 0;
  border: 0;
  background: linear-gradient(#76b9ed, #76b9ed) bottom / ${({ $active }) => ($active ? "48px" : "40px")} 2px no-repeat
    ${({ $active }) => ($active ? "#34464f" : "transparent")};
`;

const Tray = styled.div`
  display: flex;
  align-items: center;
`;

const TrayIcons = styled.div`
  display: flex;
  align-items: center;
  gap: 8px;
  margin-right: 5px;
`;

const TrayText = styled.span`
  width: ${({ $width }) => $width}px;
  line-height: 17px;
  text-align: center;
`;

const NoticeButton = styled.button`
  margin: 0 12px 0 7px;
  padding: 3px 0 0 4px;
  border: 0;
  background: none;
`;

const ShowDesktop = styled.span`
  width: 5px;
  height: 40px;
  border-left: 1px solid #5a6068;
`;

export default App;
